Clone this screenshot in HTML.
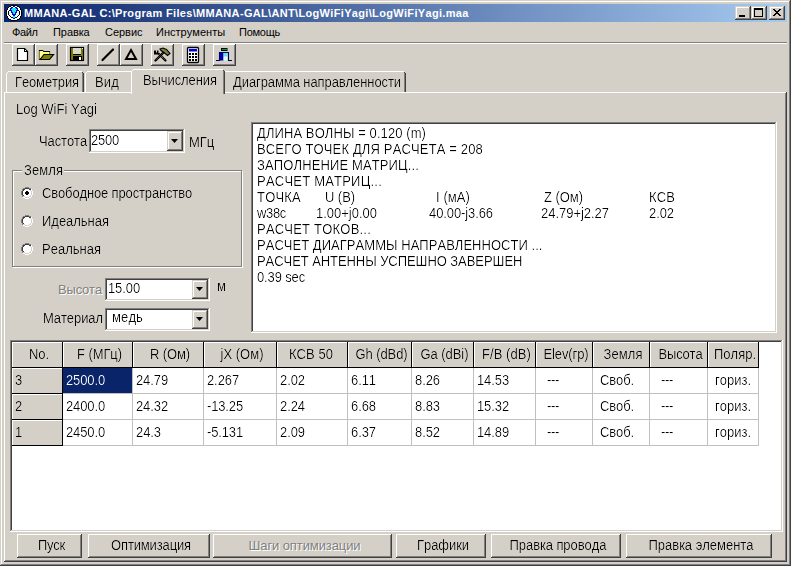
<!DOCTYPE html>
<html><head><meta charset="utf-8">
<style>
html,body{margin:0;padding:0;}
body{width:791px;height:566px;position:relative;overflow:hidden;background:#D4D0C8;font-family:"Liberation Sans",sans-serif;}
.r{position:absolute;}
.t{position:absolute;white-space:pre;font-kerning:none;}
</style></head><body>
<div class="r" style="left:0px;top:0px;width:791px;height:566px;background:#404040;"></div>
<div class="r" style="left:0px;top:0px;width:790px;height:565px;background:#D4D0C8;"></div>
<div class="r" style="left:1px;top:1px;width:789px;height:564px;background:#808080;"></div>
<div class="r" style="left:1px;top:1px;width:788px;height:563px;background:#FFFFFF;"></div>
<div class="r" style="left:2px;top:2px;width:787px;height:562px;background:#D4D0C8;"></div>
<div class="r" style="left:4px;top:4px;width:783px;height:18px;background:linear-gradient(to right,#0A246A,#A6CAF0);"></div>
<svg class="r" style="left:6px;top:5px" width="16" height="16" shape-rendering="crispEdges"><rect x="5" y="0" width="6" height="1" fill="#000000"/><rect x="3" y="1" width="2" height="1" fill="#000000"/><rect x="5" y="1" width="2" height="1" fill="#FFFFFF"/><rect x="7" y="1" width="2" height="1" fill="#0010B0"/><rect x="9" y="1" width="2" height="1" fill="#FFFFFF"/><rect x="11" y="1" width="2" height="1" fill="#000000"/><rect x="2" y="2" width="1" height="1" fill="#000000"/><rect x="3" y="2" width="2" height="1" fill="#FFFFFF"/><rect x="5" y="2" width="2" height="1" fill="#0010B0"/><rect x="7" y="2" width="2" height="1" fill="#FFFFFF"/><rect x="9" y="2" width="2" height="1" fill="#0010B0"/><rect x="11" y="2" width="2" height="1" fill="#FFFFFF"/><rect x="13" y="2" width="1" height="1" fill="#000000"/><rect x="1" y="3" width="1" height="1" fill="#000000"/><rect x="2" y="3" width="2" height="1" fill="#FFFFFF"/><rect x="4" y="3" width="2" height="1" fill="#0010B0"/><rect x="6" y="3" width="4" height="1" fill="#20E0FF"/><rect x="10" y="3" width="2" height="1" fill="#0010B0"/><rect x="12" y="3" width="2" height="1" fill="#FFFFFF"/><rect x="14" y="3" width="1" height="1" fill="#000000"/><rect x="1" y="4" width="1" height="1" fill="#000000"/><rect x="2" y="4" width="2" height="1" fill="#FFFFFF"/><rect x="4" y="4" width="1" height="1" fill="#0010B0"/><rect x="5" y="4" width="6" height="1" fill="#20E0FF"/><rect x="11" y="4" width="1" height="1" fill="#0010B0"/><rect x="12" y="4" width="2" height="1" fill="#FFFFFF"/><rect x="14" y="4" width="1" height="1" fill="#000000"/><rect x="0" y="5" width="1" height="1" fill="#000000"/><rect x="1" y="5" width="2" height="1" fill="#FFFFFF"/><rect x="3" y="5" width="1" height="1" fill="#000000"/><rect x="4" y="5" width="2" height="1" fill="#0010B0"/><rect x="6" y="5" width="4" height="1" fill="#20E0FF"/><rect x="10" y="5" width="2" height="1" fill="#0010B0"/><rect x="12" y="5" width="1" height="1" fill="#000000"/><rect x="13" y="5" width="2" height="1" fill="#FFFFFF"/><rect x="15" y="5" width="1" height="1" fill="#000000"/><rect x="0" y="6" width="1" height="1" fill="#000000"/><rect x="1" y="6" width="1" height="1" fill="#FFFFFF"/><rect x="2" y="6" width="1" height="1" fill="#000000"/><rect x="3" y="6" width="2" height="1" fill="#E8F8FF"/><rect x="5" y="6" width="1" height="1" fill="#0010B0"/><rect x="6" y="6" width="4" height="1" fill="#20E0FF"/><rect x="10" y="6" width="1" height="1" fill="#0010B0"/><rect x="11" y="6" width="2" height="1" fill="#E8F8FF"/><rect x="13" y="6" width="1" height="1" fill="#000000"/><rect x="14" y="6" width="1" height="1" fill="#FFFFFF"/><rect x="15" y="6" width="1" height="1" fill="#000000"/><rect x="0" y="7" width="1" height="1" fill="#000000"/><rect x="1" y="7" width="1" height="1" fill="#FFFFFF"/><rect x="2" y="7" width="1" height="1" fill="#000000"/><rect x="3" y="7" width="2" height="1" fill="#E8F8FF"/><rect x="5" y="7" width="2" height="1" fill="#0010B0"/><rect x="7" y="7" width="2" height="1" fill="#20E0FF"/><rect x="9" y="7" width="2" height="1" fill="#0010B0"/><rect x="11" y="7" width="2" height="1" fill="#E8F8FF"/><rect x="13" y="7" width="1" height="1" fill="#000000"/><rect x="14" y="7" width="1" height="1" fill="#FFFFFF"/><rect x="15" y="7" width="1" height="1" fill="#000000"/><rect x="0" y="8" width="1" height="1" fill="#000000"/><rect x="1" y="8" width="1" height="1" fill="#FFFFFF"/><rect x="2" y="8" width="1" height="1" fill="#000000"/><rect x="3" y="8" width="3" height="1" fill="#E8F8FF"/><rect x="6" y="8" width="1" height="1" fill="#0010B0"/><rect x="7" y="8" width="2" height="1" fill="#20E0FF"/><rect x="9" y="8" width="1" height="1" fill="#0010B0"/><rect x="10" y="8" width="3" height="1" fill="#E8F8FF"/><rect x="13" y="8" width="1" height="1" fill="#000000"/><rect x="14" y="8" width="1" height="1" fill="#FFFFFF"/><rect x="15" y="8" width="1" height="1" fill="#000000"/><rect x="0" y="9" width="1" height="1" fill="#000000"/><rect x="1" y="9" width="1" height="1" fill="#FFFFFF"/><rect x="2" y="9" width="1" height="1" fill="#000000"/><rect x="3" y="9" width="3" height="1" fill="#E8F8FF"/><rect x="6" y="9" width="4" height="1" fill="#0010B0"/><rect x="10" y="9" width="3" height="1" fill="#E8F8FF"/><rect x="13" y="9" width="1" height="1" fill="#000000"/><rect x="14" y="9" width="1" height="1" fill="#FFFFFF"/><rect x="15" y="9" width="1" height="1" fill="#000000"/><rect x="0" y="10" width="1" height="1" fill="#000000"/><rect x="1" y="10" width="2" height="1" fill="#FFFFFF"/><rect x="3" y="10" width="1" height="1" fill="#000000"/><rect x="4" y="10" width="3" height="1" fill="#E8F8FF"/><rect x="7" y="10" width="2" height="1" fill="#0010B0"/><rect x="9" y="10" width="3" height="1" fill="#E8F8FF"/><rect x="12" y="10" width="1" height="1" fill="#000000"/><rect x="13" y="10" width="2" height="1" fill="#FFFFFF"/><rect x="15" y="10" width="1" height="1" fill="#000000"/><rect x="1" y="11" width="1" height="1" fill="#000000"/><rect x="2" y="11" width="2" height="1" fill="#FFFFFF"/><rect x="4" y="11" width="1" height="1" fill="#000000"/><rect x="5" y="11" width="2" height="1" fill="#E8F8FF"/><rect x="7" y="11" width="2" height="1" fill="#20E0FF"/><rect x="9" y="11" width="2" height="1" fill="#E8F8FF"/><rect x="11" y="11" width="1" height="1" fill="#000000"/><rect x="12" y="11" width="2" height="1" fill="#FFFFFF"/><rect x="14" y="11" width="1" height="1" fill="#000000"/><rect x="1" y="12" width="1" height="1" fill="#000000"/><rect x="2" y="12" width="3" height="1" fill="#FFFFFF"/><rect x="5" y="12" width="2" height="1" fill="#000000"/><rect x="7" y="12" width="2" height="1" fill="#20E0FF"/><rect x="9" y="12" width="2" height="1" fill="#000000"/><rect x="11" y="12" width="3" height="1" fill="#FFFFFF"/><rect x="14" y="12" width="1" height="1" fill="#000000"/><rect x="2" y="13" width="1" height="1" fill="#000000"/><rect x="3" y="13" width="4" height="1" fill="#FFFFFF"/><rect x="7" y="13" width="2" height="1" fill="#0010B0"/><rect x="9" y="13" width="4" height="1" fill="#FFFFFF"/><rect x="13" y="13" width="1" height="1" fill="#000000"/><rect x="3" y="14" width="2" height="1" fill="#000000"/><rect x="5" y="14" width="6" height="1" fill="#FFFFFF"/><rect x="11" y="14" width="2" height="1" fill="#000000"/><rect x="5" y="15" width="6" height="1" fill="#000000"/></svg>
<div class="t u" style="left:24px;top:7.69px;font-size:11px;line-height:11px;color:#fff;font-weight:bold;letter-spacing:0.33px;">MMANA-GAL C:\Program Files\MMANA-GAL\ANT\LogWiFiYagi\LogWiFiYagi.maa</div>
<div class="r" style="left:735px;top:6px;width:16px;height:14px;background:#404040;"></div>
<div class="r" style="left:735px;top:6px;width:15px;height:13px;background:#D4D0C8;"></div>
<div class="r" style="left:736px;top:7px;width:14px;height:12px;background:#808080;"></div>
<div class="r" style="left:736px;top:7px;width:13px;height:11px;background:#FFFFFF;"></div>
<div class="r" style="left:737px;top:8px;width:12px;height:10px;background:#D4D0C8;"></div>
<div class="r" style="left:751px;top:6px;width:16px;height:14px;background:#404040;"></div>
<div class="r" style="left:751px;top:6px;width:15px;height:13px;background:#D4D0C8;"></div>
<div class="r" style="left:752px;top:7px;width:14px;height:12px;background:#808080;"></div>
<div class="r" style="left:752px;top:7px;width:13px;height:11px;background:#FFFFFF;"></div>
<div class="r" style="left:753px;top:8px;width:12px;height:10px;background:#D4D0C8;"></div>
<div class="r" style="left:769px;top:6px;width:16px;height:14px;background:#404040;"></div>
<div class="r" style="left:769px;top:6px;width:15px;height:13px;background:#D4D0C8;"></div>
<div class="r" style="left:770px;top:7px;width:14px;height:12px;background:#808080;"></div>
<div class="r" style="left:770px;top:7px;width:13px;height:11px;background:#FFFFFF;"></div>
<div class="r" style="left:771px;top:8px;width:12px;height:10px;background:#D4D0C8;"></div>
<div class="r" style="left:739px;top:15px;width:6px;height:2px;background:#000;"></div>
<div class="r" style="left:754px;top:8px;width:9px;height:9px;background:#000;"></div>
<div class="r" style="left:755px;top:10px;width:7px;height:6px;background:#D4D0C8;"></div>
<svg class="r" style="left:773px;top:9px" width="8" height="7" viewBox="0 0 8 7" shape-rendering="crispEdges">
<path d="M0 0h2v1h-2z M6 0h2v1h-2z M1 1h2v1h-2z M5 1h2v1h-2z M2 2h4v1h-4z M3 3h2v1h-2z M2 4h4v1h-4z M1 5h2v1h-2z M5 5h2v1h-2z M0 6h2v1h-2z M6 6h2v1h-2z" fill="#000"/>
</svg>
<div class="t u" style="left:12px;top:26.69px;font-size:11px;line-height:11px;color:#000;font-weight:normal;letter-spacing:-0.341px;">Файл</div>
<div class="t u" style="left:53px;top:26.69px;font-size:11px;line-height:11px;color:#000;font-weight:normal;letter-spacing:-0.066px;">Правка</div>
<div class="t u" style="left:105px;top:26.69px;font-size:11px;line-height:11px;color:#000;font-weight:normal;letter-spacing:-0.025px;">Сервис</div>
<div class="t u" style="left:156px;top:26.69px;font-size:11px;line-height:11px;color:#000;font-weight:normal;letter-spacing:0.026px;">Инструменты</div>
<div class="t u" style="left:239px;top:26.69px;font-size:11px;line-height:11px;color:#000;font-weight:normal;letter-spacing:-0.264px;">Помощь</div>
<div class="r" style="left:4px;top:42px;width:783px;height:1px;background:#808080;"></div>
<div class="r" style="left:4px;top:43px;width:783px;height:1px;background:#FFFFFF;"></div>
<div class="r" style="left:12px;top:44px;width:23px;height:22px;background:#404040;"></div>
<div class="r" style="left:12px;top:44px;width:22px;height:21px;background:#FFFFFF;"></div>
<div class="r" style="left:13px;top:45px;width:21px;height:20px;background:#808080;"></div>
<div class="r" style="left:13px;top:45px;width:20px;height:19px;background:#D4D0C8;"></div>
<div class="r" style="left:35px;top:44px;width:23px;height:22px;background:#404040;"></div>
<div class="r" style="left:35px;top:44px;width:22px;height:21px;background:#FFFFFF;"></div>
<div class="r" style="left:36px;top:45px;width:21px;height:20px;background:#808080;"></div>
<div class="r" style="left:36px;top:45px;width:20px;height:19px;background:#D4D0C8;"></div>
<div class="r" style="left:66px;top:44px;width:23px;height:22px;background:#404040;"></div>
<div class="r" style="left:66px;top:44px;width:22px;height:21px;background:#FFFFFF;"></div>
<div class="r" style="left:67px;top:45px;width:21px;height:20px;background:#808080;"></div>
<div class="r" style="left:67px;top:45px;width:20px;height:19px;background:#D4D0C8;"></div>
<div class="r" style="left:97px;top:44px;width:23px;height:22px;background:#404040;"></div>
<div class="r" style="left:97px;top:44px;width:22px;height:21px;background:#FFFFFF;"></div>
<div class="r" style="left:98px;top:45px;width:21px;height:20px;background:#808080;"></div>
<div class="r" style="left:98px;top:45px;width:20px;height:19px;background:#D4D0C8;"></div>
<div class="r" style="left:120px;top:44px;width:23px;height:22px;background:#404040;"></div>
<div class="r" style="left:120px;top:44px;width:22px;height:21px;background:#FFFFFF;"></div>
<div class="r" style="left:121px;top:45px;width:21px;height:20px;background:#808080;"></div>
<div class="r" style="left:121px;top:45px;width:20px;height:19px;background:#D4D0C8;"></div>
<div class="r" style="left:151px;top:44px;width:23px;height:22px;background:#404040;"></div>
<div class="r" style="left:151px;top:44px;width:22px;height:21px;background:#FFFFFF;"></div>
<div class="r" style="left:152px;top:45px;width:21px;height:20px;background:#808080;"></div>
<div class="r" style="left:152px;top:45px;width:20px;height:19px;background:#D4D0C8;"></div>
<div class="r" style="left:182px;top:44px;width:23px;height:22px;background:#404040;"></div>
<div class="r" style="left:182px;top:44px;width:22px;height:21px;background:#FFFFFF;"></div>
<div class="r" style="left:183px;top:45px;width:21px;height:20px;background:#808080;"></div>
<div class="r" style="left:183px;top:45px;width:20px;height:19px;background:#D4D0C8;"></div>
<div class="r" style="left:213px;top:44px;width:23px;height:22px;background:#404040;"></div>
<div class="r" style="left:213px;top:44px;width:22px;height:21px;background:#FFFFFF;"></div>
<div class="r" style="left:214px;top:45px;width:21px;height:20px;background:#808080;"></div>
<div class="r" style="left:214px;top:45px;width:20px;height:19px;background:#D4D0C8;"></div>

<svg class="r" style="left:12px;top:44px" width="240" height="22" viewBox="0 0 240 22">
 <!-- new doc -->
 <path d="M5.5 4.5 H12.5 L15.5 7.5 V16.5 H5.5 Z" fill="#fff" stroke="#000" stroke-width="1.2"/>
 <path d="M12 4.5 H13 L15.5 7 V8 H12 Z" fill="#000"/>
 <rect x="13" y="6" width="1" height="1" fill="#fff"/>
 <!-- open folder -->
 <path d="M27.5 15.5 V6.5 H30.5 L31.5 7.5 H37.5 V10.5" fill="#FFFF80" stroke="#000" stroke-width="1.2"/>
 <path d="M27.5 15.5 V7 H30.5 L31.5 8 H37.5 V10.5 H32 Z" fill="#FFFF80"/>
 <path d="M28 15.5 L32 10.5 H41.5 L37.5 15.5 Z" fill="#808000" stroke="#000" stroke-width="1.2"/>
 <!-- save -->
 <rect x="58.5" y="3.5" width="13" height="13" fill="#808000" stroke="#000" stroke-width="1.2"/>
 <rect x="61" y="4" width="8" height="6" fill="#D8D8D0"/>
 <rect x="61" y="10" width="8" height="1" fill="#000"/>
 <rect x="61" y="12" width="9" height="5" fill="#000"/>
 <rect x="67" y="13" width="2" height="3" fill="#fff"/>
 <rect x="70" y="4" width="1" height="1" fill="#fff"/>
 <!-- line -->
 <path d="M90.5 16 L101 5.5" stroke="#000" stroke-width="2.2" stroke-linecap="round"/>
 <!-- triangle -->
 <path d="M119 6 L124 15 H114 Z" fill="none" stroke="#000" stroke-width="2"/>
 <!-- tools -->
 <path d="M143.5 16.5 L151.5 8.5" stroke="#000" stroke-width="2.4" stroke-linecap="round"/>
 <path d="M144 16 L151 9" stroke="#804020" stroke-width="0.7"/>
 <path d="M147 10 L153.5 16.5" stroke="#000" stroke-width="2.2" stroke-linecap="round"/>
 <path d="M147.5 10.5 L153 16" stroke="#fff" stroke-width="0.6" stroke-dasharray="1 1"/>
 <path d="M148 5 L151 4 L154.5 5.5 L158 9.5 L155.5 11.5 L152 8.5 L149 6.5 Z" fill="#808040" stroke="#000" stroke-width="1.1"/>
 <path d="M142 6.5 H144 V8.5 H145 V6.5 H146.5 V10.5 H142 Z" fill="#000"/>
 <!-- calculator -->
 <rect x="175.5" y="3.5" width="11" height="15" rx="1" fill="#fff" stroke="#000" stroke-width="1.3"/>
 <rect x="177" y="5" width="8" height="2.5" fill="#0000E0"/>
 <g fill="#000">
  <rect x="177" y="9" width="2" height="2"/><rect x="180" y="9" width="2" height="2"/><rect x="183" y="9" width="2" height="2"/>
  <rect x="177" y="12" width="2" height="2"/><rect x="180" y="12" width="2" height="2"/><rect x="183" y="12" width="2" height="2"/>
  <rect x="177" y="15" width="2" height="2"/><rect x="180" y="15" width="2" height="2"/><rect x="183" y="15" width="2" height="2"/>
 </g>
 <!-- antenna -->
 <rect x="209.5" y="4.5" width="5.5" height="2" fill="#00A040" stroke="#000" stroke-width="1"/>
 <rect x="207" y="8" width="4.5" height="8.5" fill="#0000A8"/>
 <rect x="211.5" y="8.5" width="4" height="4" fill="#60E0F0"/>
 <rect x="211.5" y="12.5" width="4" height="4" fill="#E0F8FF"/>
 <path d="M204 16.5 H207.5 V8.5 H216.5 V16.5 H220" fill="none" stroke="#000060" stroke-width="1.1"/>
</svg>
<div class="r" style="left:6px;top:71px;width:78px;height:22px;background:#D4D0C8;"></div>
<div class="r" style="left:6px;top:73px;width:1px;height:20px;background:#FFFFFF;"></div>
<div class="r" style="left:7px;top:72px;width:1px;height:1px;background:#FFFFFF;"></div>
<div class="r" style="left:8px;top:71px;width:74px;height:1px;background:#FFFFFF;"></div>
<div class="r" style="left:82px;top:72px;width:1px;height:21px;background:#808080;"></div>
<div class="r" style="left:82px;top:72px;width:1px;height:1px;background:#404040;"></div>
<div class="r" style="left:83px;top:73px;width:1px;height:20px;background:#404040;"></div>
<div class="r" style="left:85px;top:71px;width:49px;height:22px;background:#D4D0C8;"></div>
<div class="r" style="left:85px;top:73px;width:1px;height:20px;background:#FFFFFF;"></div>
<div class="r" style="left:86px;top:72px;width:1px;height:1px;background:#FFFFFF;"></div>
<div class="r" style="left:87px;top:71px;width:45px;height:1px;background:#FFFFFF;"></div>
<div class="r" style="left:132px;top:72px;width:1px;height:21px;background:#808080;"></div>
<div class="r" style="left:132px;top:72px;width:1px;height:1px;background:#404040;"></div>
<div class="r" style="left:133px;top:73px;width:1px;height:20px;background:#404040;"></div>
<div class="r" style="left:222px;top:71px;width:184px;height:22px;background:#D4D0C8;"></div>
<div class="r" style="left:222px;top:73px;width:1px;height:20px;background:#FFFFFF;"></div>
<div class="r" style="left:223px;top:72px;width:1px;height:1px;background:#FFFFFF;"></div>
<div class="r" style="left:224px;top:71px;width:180px;height:1px;background:#FFFFFF;"></div>
<div class="r" style="left:404px;top:72px;width:1px;height:21px;background:#808080;"></div>
<div class="r" style="left:404px;top:72px;width:1px;height:1px;background:#404040;"></div>
<div class="r" style="left:405px;top:73px;width:1px;height:20px;background:#404040;"></div>
<div class="r" style="left:4px;top:92px;width:783px;height:470px;background:#404040;"></div>
<div class="r" style="left:4px;top:92px;width:782px;height:469px;background:#FFFFFF;"></div>
<div class="r" style="left:5px;top:93px;width:781px;height:468px;background:#808080;"></div>
<div class="r" style="left:5px;top:93px;width:780px;height:467px;background:#D4D0C8;"></div>
<div class="r" style="left:131px;top:69px;width:94px;height:25px;background:#D4D0C8;"></div>
<div class="r" style="left:131px;top:71px;width:1px;height:23px;background:#FFFFFF;"></div>
<div class="r" style="left:132px;top:70px;width:1px;height:1px;background:#FFFFFF;"></div>
<div class="r" style="left:133px;top:69px;width:90px;height:1px;background:#FFFFFF;"></div>
<div class="r" style="left:223px;top:70px;width:1px;height:24px;background:#808080;"></div>
<div class="r" style="left:223px;top:70px;width:1px;height:1px;background:#404040;"></div>
<div class="r" style="left:224px;top:71px;width:1px;height:23px;background:#404040;"></div>
<div class="r" style="left:132px;top:92px;width:91px;height:2px;background:#D4D0C8;"></div>
<div class="r" style="left:223px;top:92px;width:1px;height:2px;background:#808080;"></div>
<div class="r" style="left:89px;top:129px;width:96px;height:24px;background:#FFFFFF;"></div>
<div class="r" style="left:89px;top:129px;width:95px;height:23px;background:#808080;"></div>
<div class="r" style="left:90px;top:130px;width:94px;height:22px;background:#D4D0C8;"></div>
<div class="r" style="left:90px;top:130px;width:93px;height:21px;background:#404040;"></div>
<div class="r" style="left:91px;top:131px;width:92px;height:20px;background:#FFFFFF;"></div>
<div class="r" style="left:167px;top:131px;width:16px;height:20px;background:#404040;"></div>
<div class="r" style="left:167px;top:131px;width:15px;height:19px;background:#D4D0C8;"></div>
<div class="r" style="left:168px;top:132px;width:14px;height:18px;background:#808080;"></div>
<div class="r" style="left:168px;top:132px;width:13px;height:17px;background:#FFFFFF;"></div>
<div class="r" style="left:169px;top:133px;width:12px;height:16px;background:#D4D0C8;"></div>
<svg class="r" style="left:171px;top:139px" width="7" height="4" viewBox="0 0 7 4"><path d="M0 0 H7 L3.5 4 Z" fill="#000"/></svg>
<div class="r" style="left:13px;top:171px;width:228px;height:95px;border:1px solid #fff"></div>
<div class="r" style="left:12px;top:170px;width:228px;height:95px;border:1px solid #808080"></div>
<div class="r" style="left:22px;top:165px;width:42px;height:12px;background:#D4D0C8;"></div>
<svg class="r" style="left:21px;top:187px" width="12" height="12" shape-rendering="crispEdges"><rect x="4" y="0" width="4" height="1" fill="#808080"/><rect x="2" y="1" width="2" height="1" fill="#808080"/><rect x="4" y="1" width="4" height="1" fill="#404040"/><rect x="8" y="1" width="2" height="1" fill="#808080"/><rect x="1" y="2" width="1" height="1" fill="#808080"/><rect x="2" y="2" width="2" height="1" fill="#404040"/><rect x="4" y="2" width="4" height="1" fill="#FFFFFF"/><rect x="8" y="2" width="2" height="1" fill="#404040"/><rect x="10" y="2" width="1" height="1" fill="#FFFFFF"/><rect x="1" y="3" width="1" height="1" fill="#808080"/><rect x="2" y="3" width="1" height="1" fill="#404040"/><rect x="3" y="3" width="6" height="1" fill="#FFFFFF"/><rect x="9" y="3" width="1" height="1" fill="#D4D0C8"/><rect x="10" y="3" width="1" height="1" fill="#FFFFFF"/><rect x="0" y="4" width="1" height="1" fill="#808080"/><rect x="1" y="4" width="1" height="1" fill="#404040"/><rect x="2" y="4" width="8" height="1" fill="#FFFFFF"/><rect x="10" y="4" width="1" height="1" fill="#D4D0C8"/><rect x="11" y="4" width="1" height="1" fill="#FFFFFF"/><rect x="0" y="5" width="1" height="1" fill="#808080"/><rect x="1" y="5" width="1" height="1" fill="#404040"/><rect x="2" y="5" width="8" height="1" fill="#FFFFFF"/><rect x="10" y="5" width="1" height="1" fill="#D4D0C8"/><rect x="11" y="5" width="1" height="1" fill="#FFFFFF"/><rect x="0" y="6" width="1" height="1" fill="#808080"/><rect x="1" y="6" width="1" height="1" fill="#404040"/><rect x="2" y="6" width="8" height="1" fill="#FFFFFF"/><rect x="10" y="6" width="1" height="1" fill="#D4D0C8"/><rect x="11" y="6" width="1" height="1" fill="#FFFFFF"/><rect x="0" y="7" width="1" height="1" fill="#808080"/><rect x="1" y="7" width="1" height="1" fill="#404040"/><rect x="2" y="7" width="8" height="1" fill="#FFFFFF"/><rect x="10" y="7" width="1" height="1" fill="#D4D0C8"/><rect x="11" y="7" width="1" height="1" fill="#FFFFFF"/><rect x="1" y="8" width="1" height="1" fill="#808080"/><rect x="2" y="8" width="1" height="1" fill="#404040"/><rect x="3" y="8" width="6" height="1" fill="#FFFFFF"/><rect x="9" y="8" width="1" height="1" fill="#D4D0C8"/><rect x="10" y="8" width="1" height="1" fill="#FFFFFF"/><rect x="1" y="9" width="1" height="1" fill="#808080"/><rect x="2" y="9" width="2" height="1" fill="#D4D0C8"/><rect x="4" y="9" width="4" height="1" fill="#FFFFFF"/><rect x="8" y="9" width="2" height="1" fill="#D4D0C8"/><rect x="10" y="9" width="1" height="1" fill="#FFFFFF"/><rect x="2" y="10" width="2" height="1" fill="#FFFFFF"/><rect x="4" y="10" width="4" height="1" fill="#D4D0C8"/><rect x="8" y="10" width="2" height="1" fill="#FFFFFF"/><rect x="4" y="11" width="4" height="1" fill="#FFFFFF"/><rect x="5" y="4" width="1" height="1" fill="#000"/><rect x="6" y="4" width="1" height="1" fill="#000"/><rect x="4" y="5" width="1" height="1" fill="#000"/><rect x="5" y="5" width="1" height="1" fill="#000"/><rect x="6" y="5" width="1" height="1" fill="#000"/><rect x="7" y="5" width="1" height="1" fill="#000"/><rect x="4" y="6" width="1" height="1" fill="#000"/><rect x="5" y="6" width="1" height="1" fill="#000"/><rect x="6" y="6" width="1" height="1" fill="#000"/><rect x="7" y="6" width="1" height="1" fill="#000"/><rect x="5" y="7" width="1" height="1" fill="#000"/><rect x="6" y="7" width="1" height="1" fill="#000"/></svg>
<svg class="r" style="left:21px;top:215px" width="12" height="12" shape-rendering="crispEdges"><rect x="4" y="0" width="4" height="1" fill="#808080"/><rect x="2" y="1" width="2" height="1" fill="#808080"/><rect x="4" y="1" width="4" height="1" fill="#404040"/><rect x="8" y="1" width="2" height="1" fill="#808080"/><rect x="1" y="2" width="1" height="1" fill="#808080"/><rect x="2" y="2" width="2" height="1" fill="#404040"/><rect x="4" y="2" width="4" height="1" fill="#FFFFFF"/><rect x="8" y="2" width="2" height="1" fill="#404040"/><rect x="10" y="2" width="1" height="1" fill="#FFFFFF"/><rect x="1" y="3" width="1" height="1" fill="#808080"/><rect x="2" y="3" width="1" height="1" fill="#404040"/><rect x="3" y="3" width="6" height="1" fill="#FFFFFF"/><rect x="9" y="3" width="1" height="1" fill="#D4D0C8"/><rect x="10" y="3" width="1" height="1" fill="#FFFFFF"/><rect x="0" y="4" width="1" height="1" fill="#808080"/><rect x="1" y="4" width="1" height="1" fill="#404040"/><rect x="2" y="4" width="8" height="1" fill="#FFFFFF"/><rect x="10" y="4" width="1" height="1" fill="#D4D0C8"/><rect x="11" y="4" width="1" height="1" fill="#FFFFFF"/><rect x="0" y="5" width="1" height="1" fill="#808080"/><rect x="1" y="5" width="1" height="1" fill="#404040"/><rect x="2" y="5" width="8" height="1" fill="#FFFFFF"/><rect x="10" y="5" width="1" height="1" fill="#D4D0C8"/><rect x="11" y="5" width="1" height="1" fill="#FFFFFF"/><rect x="0" y="6" width="1" height="1" fill="#808080"/><rect x="1" y="6" width="1" height="1" fill="#404040"/><rect x="2" y="6" width="8" height="1" fill="#FFFFFF"/><rect x="10" y="6" width="1" height="1" fill="#D4D0C8"/><rect x="11" y="6" width="1" height="1" fill="#FFFFFF"/><rect x="0" y="7" width="1" height="1" fill="#808080"/><rect x="1" y="7" width="1" height="1" fill="#404040"/><rect x="2" y="7" width="8" height="1" fill="#FFFFFF"/><rect x="10" y="7" width="1" height="1" fill="#D4D0C8"/><rect x="11" y="7" width="1" height="1" fill="#FFFFFF"/><rect x="1" y="8" width="1" height="1" fill="#808080"/><rect x="2" y="8" width="1" height="1" fill="#404040"/><rect x="3" y="8" width="6" height="1" fill="#FFFFFF"/><rect x="9" y="8" width="1" height="1" fill="#D4D0C8"/><rect x="10" y="8" width="1" height="1" fill="#FFFFFF"/><rect x="1" y="9" width="1" height="1" fill="#808080"/><rect x="2" y="9" width="2" height="1" fill="#D4D0C8"/><rect x="4" y="9" width="4" height="1" fill="#FFFFFF"/><rect x="8" y="9" width="2" height="1" fill="#D4D0C8"/><rect x="10" y="9" width="1" height="1" fill="#FFFFFF"/><rect x="2" y="10" width="2" height="1" fill="#FFFFFF"/><rect x="4" y="10" width="4" height="1" fill="#D4D0C8"/><rect x="8" y="10" width="2" height="1" fill="#FFFFFF"/><rect x="4" y="11" width="4" height="1" fill="#FFFFFF"/></svg>
<svg class="r" style="left:21px;top:243px" width="12" height="12" shape-rendering="crispEdges"><rect x="4" y="0" width="4" height="1" fill="#808080"/><rect x="2" y="1" width="2" height="1" fill="#808080"/><rect x="4" y="1" width="4" height="1" fill="#404040"/><rect x="8" y="1" width="2" height="1" fill="#808080"/><rect x="1" y="2" width="1" height="1" fill="#808080"/><rect x="2" y="2" width="2" height="1" fill="#404040"/><rect x="4" y="2" width="4" height="1" fill="#FFFFFF"/><rect x="8" y="2" width="2" height="1" fill="#404040"/><rect x="10" y="2" width="1" height="1" fill="#FFFFFF"/><rect x="1" y="3" width="1" height="1" fill="#808080"/><rect x="2" y="3" width="1" height="1" fill="#404040"/><rect x="3" y="3" width="6" height="1" fill="#FFFFFF"/><rect x="9" y="3" width="1" height="1" fill="#D4D0C8"/><rect x="10" y="3" width="1" height="1" fill="#FFFFFF"/><rect x="0" y="4" width="1" height="1" fill="#808080"/><rect x="1" y="4" width="1" height="1" fill="#404040"/><rect x="2" y="4" width="8" height="1" fill="#FFFFFF"/><rect x="10" y="4" width="1" height="1" fill="#D4D0C8"/><rect x="11" y="4" width="1" height="1" fill="#FFFFFF"/><rect x="0" y="5" width="1" height="1" fill="#808080"/><rect x="1" y="5" width="1" height="1" fill="#404040"/><rect x="2" y="5" width="8" height="1" fill="#FFFFFF"/><rect x="10" y="5" width="1" height="1" fill="#D4D0C8"/><rect x="11" y="5" width="1" height="1" fill="#FFFFFF"/><rect x="0" y="6" width="1" height="1" fill="#808080"/><rect x="1" y="6" width="1" height="1" fill="#404040"/><rect x="2" y="6" width="8" height="1" fill="#FFFFFF"/><rect x="10" y="6" width="1" height="1" fill="#D4D0C8"/><rect x="11" y="6" width="1" height="1" fill="#FFFFFF"/><rect x="0" y="7" width="1" height="1" fill="#808080"/><rect x="1" y="7" width="1" height="1" fill="#404040"/><rect x="2" y="7" width="8" height="1" fill="#FFFFFF"/><rect x="10" y="7" width="1" height="1" fill="#D4D0C8"/><rect x="11" y="7" width="1" height="1" fill="#FFFFFF"/><rect x="1" y="8" width="1" height="1" fill="#808080"/><rect x="2" y="8" width="1" height="1" fill="#404040"/><rect x="3" y="8" width="6" height="1" fill="#FFFFFF"/><rect x="9" y="8" width="1" height="1" fill="#D4D0C8"/><rect x="10" y="8" width="1" height="1" fill="#FFFFFF"/><rect x="1" y="9" width="1" height="1" fill="#808080"/><rect x="2" y="9" width="2" height="1" fill="#D4D0C8"/><rect x="4" y="9" width="4" height="1" fill="#FFFFFF"/><rect x="8" y="9" width="2" height="1" fill="#D4D0C8"/><rect x="10" y="9" width="1" height="1" fill="#FFFFFF"/><rect x="2" y="10" width="2" height="1" fill="#FFFFFF"/><rect x="4" y="10" width="4" height="1" fill="#D4D0C8"/><rect x="8" y="10" width="2" height="1" fill="#FFFFFF"/><rect x="4" y="11" width="4" height="1" fill="#FFFFFF"/></svg>
<div class="t u" style="left:59px;top:284.00px;font-size:13px;line-height:13px;color:#fff;font-weight:normal;letter-spacing:-0.155px;">Высота</div>
<div class="t u" style="left:58px;top:283.00px;font-size:13px;line-height:13px;color:#808080;font-weight:normal;letter-spacing:-0.155px;">Высота</div>
<div class="r" style="left:105px;top:278px;width:105px;height:23px;background:#FFFFFF;"></div>
<div class="r" style="left:105px;top:278px;width:104px;height:22px;background:#808080;"></div>
<div class="r" style="left:106px;top:279px;width:103px;height:21px;background:#D4D0C8;"></div>
<div class="r" style="left:106px;top:279px;width:102px;height:20px;background:#404040;"></div>
<div class="r" style="left:107px;top:280px;width:101px;height:19px;background:#FFFFFF;"></div>
<div class="r" style="left:192px;top:280px;width:16px;height:19px;background:#404040;"></div>
<div class="r" style="left:192px;top:280px;width:15px;height:18px;background:#D4D0C8;"></div>
<div class="r" style="left:193px;top:281px;width:14px;height:17px;background:#808080;"></div>
<div class="r" style="left:193px;top:281px;width:13px;height:16px;background:#FFFFFF;"></div>
<div class="r" style="left:194px;top:282px;width:12px;height:15px;background:#D4D0C8;"></div>
<svg class="r" style="left:196px;top:287px" width="7" height="4" viewBox="0 0 7 4"><path d="M0 0 H7 L3.5 4 Z" fill="#000"/></svg>
<div class="r" style="left:105px;top:308px;width:105px;height:23px;background:#FFFFFF;"></div>
<div class="r" style="left:105px;top:308px;width:104px;height:22px;background:#808080;"></div>
<div class="r" style="left:106px;top:309px;width:103px;height:21px;background:#D4D0C8;"></div>
<div class="r" style="left:106px;top:309px;width:102px;height:20px;background:#404040;"></div>
<div class="r" style="left:107px;top:310px;width:101px;height:19px;background:#FFFFFF;"></div>
<div class="r" style="left:192px;top:310px;width:16px;height:19px;background:#404040;"></div>
<div class="r" style="left:192px;top:310px;width:15px;height:18px;background:#D4D0C8;"></div>
<div class="r" style="left:193px;top:311px;width:14px;height:17px;background:#808080;"></div>
<div class="r" style="left:193px;top:311px;width:13px;height:16px;background:#FFFFFF;"></div>
<div class="r" style="left:194px;top:312px;width:12px;height:15px;background:#D4D0C8;"></div>
<svg class="r" style="left:196px;top:317px" width="7" height="4" viewBox="0 0 7 4"><path d="M0 0 H7 L3.5 4 Z" fill="#000"/></svg>
<div class="r" style="left:251px;top:122px;width:526px;height:211px;background:#FFFFFF;"></div>
<div class="r" style="left:251px;top:122px;width:525px;height:210px;background:#808080;"></div>
<div class="r" style="left:252px;top:123px;width:524px;height:209px;background:#D4D0C8;"></div>
<div class="r" style="left:252px;top:123px;width:523px;height:208px;background:#404040;"></div>
<div class="r" style="left:253px;top:124px;width:522px;height:207px;background:#FFFFFF;"></div>
<div class="r" style="left:10px;top:340px;width:773px;height:192px;background:#FFFFFF;"></div>
<div class="r" style="left:10px;top:340px;width:772px;height:191px;background:#808080;"></div>
<div class="r" style="left:11px;top:341px;width:771px;height:190px;background:#D4D0C8;"></div>
<div class="r" style="left:11px;top:341px;width:770px;height:189px;background:#404040;"></div>
<div class="r" style="left:12px;top:342px;width:769px;height:188px;background:#FFFFFF;"></div>
<div class="r" style="left:63px;top:393px;width:696px;height:1px;background:#C0C0C0;"></div>
<div class="r" style="left:63px;top:419px;width:696px;height:1px;background:#C0C0C0;"></div>
<div class="r" style="left:63px;top:445px;width:696px;height:1px;background:#C0C0C0;"></div>
<div class="r" style="left:132px;top:368px;width:1px;height:78px;background:#C0C0C0;"></div>
<div class="r" style="left:203px;top:368px;width:1px;height:78px;background:#C0C0C0;"></div>
<div class="r" style="left:276px;top:368px;width:1px;height:78px;background:#C0C0C0;"></div>
<div class="r" style="left:347px;top:368px;width:1px;height:78px;background:#C0C0C0;"></div>
<div class="r" style="left:411px;top:368px;width:1px;height:78px;background:#C0C0C0;"></div>
<div class="r" style="left:473px;top:368px;width:1px;height:78px;background:#C0C0C0;"></div>
<div class="r" style="left:535px;top:368px;width:1px;height:78px;background:#C0C0C0;"></div>
<div class="r" style="left:592px;top:368px;width:1px;height:78px;background:#C0C0C0;"></div>
<div class="r" style="left:649px;top:368px;width:1px;height:78px;background:#C0C0C0;"></div>
<div class="r" style="left:707px;top:368px;width:1px;height:78px;background:#C0C0C0;"></div>
<div class="r" style="left:758px;top:368px;width:1px;height:78px;background:#C0C0C0;"></div>
<div class="r" style="left:12px;top:342px;width:50px;height:25px;background:#D4D0C8;"></div>
<div class="r" style="left:12px;top:342px;width:50px;height:1px;background:#FFFFFF;"></div>
<div class="r" style="left:12px;top:342px;width:1px;height:25px;background:#FFFFFF;"></div>
<div class="r" style="left:62px;top:342px;width:1px;height:26px;background:#000;"></div>
<div class="r" style="left:63px;top:342px;width:69px;height:25px;background:#D4D0C8;"></div>
<div class="r" style="left:63px;top:342px;width:69px;height:1px;background:#FFFFFF;"></div>
<div class="r" style="left:63px;top:342px;width:1px;height:25px;background:#FFFFFF;"></div>
<div class="r" style="left:132px;top:342px;width:1px;height:26px;background:#000;"></div>
<div class="r" style="left:133px;top:342px;width:70px;height:25px;background:#D4D0C8;"></div>
<div class="r" style="left:133px;top:342px;width:70px;height:1px;background:#FFFFFF;"></div>
<div class="r" style="left:133px;top:342px;width:1px;height:25px;background:#FFFFFF;"></div>
<div class="r" style="left:203px;top:342px;width:1px;height:26px;background:#000;"></div>
<div class="r" style="left:204px;top:342px;width:72px;height:25px;background:#D4D0C8;"></div>
<div class="r" style="left:204px;top:342px;width:72px;height:1px;background:#FFFFFF;"></div>
<div class="r" style="left:204px;top:342px;width:1px;height:25px;background:#FFFFFF;"></div>
<div class="r" style="left:276px;top:342px;width:1px;height:26px;background:#000;"></div>
<div class="r" style="left:277px;top:342px;width:70px;height:25px;background:#D4D0C8;"></div>
<div class="r" style="left:277px;top:342px;width:70px;height:1px;background:#FFFFFF;"></div>
<div class="r" style="left:277px;top:342px;width:1px;height:25px;background:#FFFFFF;"></div>
<div class="r" style="left:347px;top:342px;width:1px;height:26px;background:#000;"></div>
<div class="r" style="left:348px;top:342px;width:63px;height:25px;background:#D4D0C8;"></div>
<div class="r" style="left:348px;top:342px;width:63px;height:1px;background:#FFFFFF;"></div>
<div class="r" style="left:348px;top:342px;width:1px;height:25px;background:#FFFFFF;"></div>
<div class="r" style="left:411px;top:342px;width:1px;height:26px;background:#000;"></div>
<div class="r" style="left:412px;top:342px;width:61px;height:25px;background:#D4D0C8;"></div>
<div class="r" style="left:412px;top:342px;width:61px;height:1px;background:#FFFFFF;"></div>
<div class="r" style="left:412px;top:342px;width:1px;height:25px;background:#FFFFFF;"></div>
<div class="r" style="left:473px;top:342px;width:1px;height:26px;background:#000;"></div>
<div class="r" style="left:474px;top:342px;width:61px;height:25px;background:#D4D0C8;"></div>
<div class="r" style="left:474px;top:342px;width:61px;height:1px;background:#FFFFFF;"></div>
<div class="r" style="left:474px;top:342px;width:1px;height:25px;background:#FFFFFF;"></div>
<div class="r" style="left:535px;top:342px;width:1px;height:26px;background:#000;"></div>
<div class="r" style="left:536px;top:342px;width:56px;height:25px;background:#D4D0C8;"></div>
<div class="r" style="left:536px;top:342px;width:56px;height:1px;background:#FFFFFF;"></div>
<div class="r" style="left:536px;top:342px;width:1px;height:25px;background:#FFFFFF;"></div>
<div class="r" style="left:592px;top:342px;width:1px;height:26px;background:#000;"></div>
<div class="r" style="left:593px;top:342px;width:56px;height:25px;background:#D4D0C8;"></div>
<div class="r" style="left:593px;top:342px;width:56px;height:1px;background:#FFFFFF;"></div>
<div class="r" style="left:593px;top:342px;width:1px;height:25px;background:#FFFFFF;"></div>
<div class="r" style="left:649px;top:342px;width:1px;height:26px;background:#000;"></div>
<div class="r" style="left:650px;top:342px;width:57px;height:25px;background:#D4D0C8;"></div>
<div class="r" style="left:650px;top:342px;width:57px;height:1px;background:#FFFFFF;"></div>
<div class="r" style="left:650px;top:342px;width:1px;height:25px;background:#FFFFFF;"></div>
<div class="r" style="left:707px;top:342px;width:1px;height:26px;background:#000;"></div>
<div class="r" style="left:708px;top:342px;width:50px;height:25px;background:#D4D0C8;"></div>
<div class="r" style="left:708px;top:342px;width:50px;height:1px;background:#FFFFFF;"></div>
<div class="r" style="left:708px;top:342px;width:1px;height:25px;background:#FFFFFF;"></div>
<div class="r" style="left:758px;top:342px;width:1px;height:26px;background:#000;"></div>
<div class="r" style="left:12px;top:367px;width:747px;height:1px;background:#000;"></div>
<div class="r" style="left:12px;top:368px;width:50px;height:25px;background:#D4D0C8;"></div>
<div class="r" style="left:12px;top:368px;width:50px;height:1px;background:#FFFFFF;"></div>
<div class="r" style="left:12px;top:368px;width:1px;height:25px;background:#FFFFFF;"></div>
<div class="r" style="left:12px;top:393px;width:51px;height:1px;background:#000;"></div>
<div class="r" style="left:62px;top:368px;width:1px;height:26px;background:#000;"></div>
<div class="r" style="left:12px;top:394px;width:50px;height:25px;background:#D4D0C8;"></div>
<div class="r" style="left:12px;top:394px;width:50px;height:1px;background:#FFFFFF;"></div>
<div class="r" style="left:12px;top:394px;width:1px;height:25px;background:#FFFFFF;"></div>
<div class="r" style="left:12px;top:419px;width:51px;height:1px;background:#000;"></div>
<div class="r" style="left:62px;top:394px;width:1px;height:26px;background:#000;"></div>
<div class="r" style="left:12px;top:420px;width:50px;height:25px;background:#D4D0C8;"></div>
<div class="r" style="left:12px;top:420px;width:50px;height:1px;background:#FFFFFF;"></div>
<div class="r" style="left:12px;top:420px;width:1px;height:25px;background:#FFFFFF;"></div>
<div class="r" style="left:12px;top:445px;width:51px;height:1px;background:#000;"></div>
<div class="r" style="left:62px;top:420px;width:1px;height:26px;background:#000;"></div>
<div class="r" style="left:63px;top:368px;width:69px;height:25px;background:#0A246A;"></div>
<div class="r" style="left:17px;top:534px;width:65px;height:24px;background:#404040;"></div>
<div class="r" style="left:17px;top:534px;width:64px;height:23px;background:#FFFFFF;"></div>
<div class="r" style="left:18px;top:535px;width:63px;height:22px;background:#808080;"></div>
<div class="r" style="left:18px;top:535px;width:62px;height:21px;background:#D4D0C8;"></div>
<div class="r" style="left:88px;top:534px;width:122px;height:24px;background:#404040;"></div>
<div class="r" style="left:88px;top:534px;width:121px;height:23px;background:#FFFFFF;"></div>
<div class="r" style="left:89px;top:535px;width:120px;height:22px;background:#808080;"></div>
<div class="r" style="left:89px;top:535px;width:119px;height:21px;background:#D4D0C8;"></div>
<div class="r" style="left:213px;top:534px;width:179px;height:24px;background:#404040;"></div>
<div class="r" style="left:213px;top:534px;width:178px;height:23px;background:#FFFFFF;"></div>
<div class="r" style="left:214px;top:535px;width:177px;height:22px;background:#808080;"></div>
<div class="r" style="left:214px;top:535px;width:176px;height:21px;background:#D4D0C8;"></div>
<div class="t u" style="left:216px;top:540.00px;font-size:13px;line-height:13px;color:#fff;font-weight:normal;letter-spacing:-0.100px;width:179px;text-align:center;">Шаги оптимизации</div>
<div class="t u" style="left:215px;top:539.00px;font-size:13px;line-height:13px;color:#808080;font-weight:normal;letter-spacing:-0.100px;width:179px;text-align:center;">Шаги оптимизации</div>
<div class="r" style="left:396px;top:534px;width:90px;height:24px;background:#404040;"></div>
<div class="r" style="left:396px;top:534px;width:89px;height:23px;background:#FFFFFF;"></div>
<div class="r" style="left:397px;top:535px;width:88px;height:22px;background:#808080;"></div>
<div class="r" style="left:397px;top:535px;width:87px;height:21px;background:#D4D0C8;"></div>
<div class="r" style="left:491px;top:534px;width:130px;height:24px;background:#404040;"></div>
<div class="r" style="left:491px;top:534px;width:129px;height:23px;background:#FFFFFF;"></div>
<div class="r" style="left:492px;top:535px;width:128px;height:22px;background:#808080;"></div>
<div class="r" style="left:492px;top:535px;width:127px;height:21px;background:#D4D0C8;"></div>
<div class="r" style="left:626px;top:534px;width:146px;height:24px;background:#404040;"></div>
<div class="r" style="left:626px;top:534px;width:145px;height:23px;background:#FFFFFF;"></div>
<div class="r" style="left:627px;top:535px;width:144px;height:22px;background:#808080;"></div>
<div class="r" style="left:627px;top:535px;width:143px;height:21px;background:#D4D0C8;"></div>
<svg width="0" height="0" style="position:absolute"><filter id="crisp" x="0" y="0" width="100%" height="100%"><feComponentTransfer><feFuncA type="gamma" amplitude="1" exponent="1.6" offset="0"/></feComponentTransfer></filter></svg>
<div style="position:absolute;left:0;top:0;width:791px;height:566px;filter:url(#crisp)">
<div class="t" style="left:15px;top:76.00px;font-size:13px;line-height:13px;color:#000;font-weight:normal;letter-spacing:-0.128px;transform:scaleY(1.08);transform-origin:0 11.00px;">Геометрия</div>
<div class="t" style="left:95px;top:76.00px;font-size:13px;line-height:13px;color:#000;font-weight:normal;letter-spacing:0.161px;transform:scaleY(1.08);transform-origin:0 11.00px;">Вид</div>
<div class="t" style="left:143px;top:74.00px;font-size:13px;line-height:13px;color:#000;font-weight:normal;letter-spacing:-0.085px;transform:scaleY(1.08);transform-origin:0 11.00px;">Вычисления</div>
<div class="t" style="left:233px;top:76.00px;font-size:13px;line-height:13px;color:#000;font-weight:normal;letter-spacing:-0.090px;transform:scaleY(1.08);transform-origin:0 11.00px;">Диаграмма направленности</div>
<div class="t" style="left:16px;top:103.00px;font-size:13px;line-height:13px;color:#000;font-weight:normal;letter-spacing:0.006px;transform:scaleY(1.08);transform-origin:0 11.00px;">Log WiFi Yagi</div>
<div class="t" style="left:39px;top:135.00px;font-size:13px;line-height:13px;color:#000;font-weight:normal;letter-spacing:-0.109px;transform:scaleY(1.08);transform-origin:0 11.00px;">Частота</div>
<div class="t" style="left:91px;top:134.00px;font-size:13px;line-height:13px;color:#000;font-weight:normal;letter-spacing:-0.230px;transform:scaleY(1.08);transform-origin:0 11.00px;">2500</div>
<div class="t" style="left:189px;top:136.00px;font-size:13px;line-height:13px;color:#000;font-weight:normal;letter-spacing:-0.105px;transform:scaleY(1.08);transform-origin:0 11.00px;">МГц</div>
<div class="t" style="left:24px;top:164.00px;font-size:13px;line-height:13px;color:#000;font-weight:normal;letter-spacing:0.071px;transform:scaleY(1.08);transform-origin:0 11.00px;">Земля</div>
<div class="t" style="left:42px;top:187.00px;font-size:13px;line-height:13px;color:#000;font-weight:normal;letter-spacing:-0.146px;transform:scaleY(1.08);transform-origin:0 11.00px;">Свободное пространство</div>
<div class="t" style="left:42px;top:215.00px;font-size:13px;line-height:13px;color:#000;font-weight:normal;letter-spacing:-0.022px;transform:scaleY(1.08);transform-origin:0 11.00px;">Идеальная</div>
<div class="t" style="left:42px;top:243.00px;font-size:13px;line-height:13px;color:#000;font-weight:normal;letter-spacing:0.008px;transform:scaleY(1.08);transform-origin:0 11.00px;">Реальная</div>
<div class="t" style="left:108px;top:282.00px;font-size:13px;line-height:13px;color:#000;font-weight:normal;letter-spacing:-0.106px;transform:scaleY(1.08);transform-origin:0 11.00px;">15.00</div>
<div class="t" style="left:217px;top:280.00px;font-size:13px;line-height:13px;color:#000;font-weight:normal;letter-spacing:0.062px;transform:scaleY(1.08);transform-origin:0 11.00px;">м</div>
<div class="t" style="left:43px;top:312.00px;font-size:13px;line-height:13px;color:#000;font-weight:normal;letter-spacing:-0.069px;transform:scaleY(1.08);transform-origin:0 11.00px;">Материал</div>
<div class="t" style="left:112px;top:311.00px;font-size:13px;line-height:13px;color:#000;font-weight:normal;letter-spacing:0.119px;transform:scaleY(1.08);transform-origin:0 11.00px;">медь</div>
<div class="t" style="left:257px;top:127.00px;font-size:13px;line-height:13px;color:#000;font-weight:normal;letter-spacing:0.087px;transform:scaleY(1.08);transform-origin:0 11.00px;">ДЛИНА ВОЛНЫ = 0.120 (m)</div>
<div class="t" style="left:257px;top:143.00px;font-size:13px;line-height:13px;color:#000;font-weight:normal;letter-spacing:0.152px;transform:scaleY(1.08);transform-origin:0 11.00px;">ВСЕГО ТОЧЕК ДЛЯ РАСЧЕТА = 208</div>
<div class="t" style="left:257px;top:159.00px;font-size:13px;line-height:13px;color:#000;font-weight:normal;letter-spacing:0.125px;transform:scaleY(1.08);transform-origin:0 11.00px;">ЗАПОЛНЕНИЕ МАТРИЦ...</div>
<div class="t" style="left:257px;top:175.00px;font-size:13px;line-height:13px;color:#000;font-weight:normal;letter-spacing:0.217px;transform:scaleY(1.08);transform-origin:0 11.00px;">РАСЧЕТ МАТРИЦ...</div>
<div class="t" style="left:257px;top:191.00px;font-size:13px;line-height:13px;color:#000;font-weight:normal;letter-spacing:0.208px;transform:scaleY(1.08);transform-origin:0 11.00px;">ТОЧКА</div>
<div class="t" style="left:325px;top:191.00px;font-size:13px;line-height:13px;color:#000;font-weight:normal;letter-spacing:-0.066px;transform:scaleY(1.08);transform-origin:0 11.00px;">U (B)</div>
<div class="t" style="left:436px;top:191.00px;font-size:13px;line-height:13px;color:#000;font-weight:normal;letter-spacing:0.085px;transform:scaleY(1.08);transform-origin:0 11.00px;">I (мА)</div>
<div class="t" style="left:544px;top:191.00px;font-size:13px;line-height:13px;color:#000;font-weight:normal;letter-spacing:-0.043px;transform:scaleY(1.08);transform-origin:0 11.00px;">Z (Ом)</div>
<div class="t" style="left:649px;top:191.00px;font-size:13px;line-height:13px;color:#000;font-weight:normal;letter-spacing:0.123px;transform:scaleY(1.08);transform-origin:0 11.00px;">КСВ</div>
<div class="t" style="left:257px;top:207.00px;font-size:13px;line-height:13px;color:#000;font-weight:normal;letter-spacing:-0.337px;transform:scaleY(1.08);transform-origin:0 11.00px;">w38c</div>
<div class="t" style="left:316px;top:207.00px;font-size:13px;line-height:13px;color:#000;font-weight:normal;letter-spacing:-0.008px;transform:scaleY(1.08);transform-origin:0 11.00px;">1.00+j0.00</div>
<div class="t" style="left:429px;top:207.00px;font-size:13px;line-height:13px;color:#000;font-weight:normal;letter-spacing:-0.096px;transform:scaleY(1.08);transform-origin:0 11.00px;">40.00-j3.66</div>
<div class="t" style="left:541px;top:207.00px;font-size:13px;line-height:13px;color:#000;font-weight:normal;letter-spacing:-0.028px;transform:scaleY(1.08);transform-origin:0 11.00px;">24.79+j2.27</div>
<div class="t" style="left:649px;top:207.00px;font-size:13px;line-height:13px;color:#000;font-weight:normal;letter-spacing:-0.075px;transform:scaleY(1.08);transform-origin:0 11.00px;">2.02</div>
<div class="t" style="left:257px;top:223.00px;font-size:13px;line-height:13px;color:#000;font-weight:normal;letter-spacing:0.209px;transform:scaleY(1.08);transform-origin:0 11.00px;">РАСЧЕТ ТОКОВ...</div>
<div class="t" style="left:257px;top:239.00px;font-size:13px;line-height:13px;color:#000;font-weight:normal;letter-spacing:0.036px;transform:scaleY(1.08);transform-origin:0 11.00px;">РАСЧЕТ ДИАГРАММЫ НАПРАВЛЕННОСТИ ...</div>
<div class="t" style="left:257px;top:255.00px;font-size:13px;line-height:13px;color:#000;font-weight:normal;letter-spacing:-0.067px;transform:scaleY(1.08);transform-origin:0 11.00px;">РАСЧЕТ АНТЕННЫ УСПЕШНО ЗАВЕРШЕН</div>
<div class="t" style="left:257px;top:271.00px;font-size:13px;line-height:13px;color:#000;font-weight:normal;letter-spacing:-0.143px;transform:scaleY(1.08);transform-origin:0 11.00px;">0.39 sec</div>
<div class="t" style="left:14px;top:348.00px;font-size:13px;line-height:13px;color:#000;font-weight:normal;letter-spacing:-0.077px;width:50px;text-align:center;transform:scaleY(1.08);transform-origin:0 11.00px;">No.</div>
<div class="t" style="left:65px;top:348.00px;font-size:13px;line-height:13px;color:#000;font-weight:normal;letter-spacing:-0.075px;width:69px;text-align:center;transform:scaleY(1.08);transform-origin:0 11.00px;">F (MГц)</div>
<div class="t" style="left:135px;top:348.00px;font-size:13px;line-height:13px;color:#000;font-weight:normal;letter-spacing:-0.118px;width:70px;text-align:center;transform:scaleY(1.08);transform-origin:0 11.00px;">R (Ом)</div>
<div class="t" style="left:206px;top:348.00px;font-size:13px;line-height:13px;color:#000;font-weight:normal;letter-spacing:0.017px;width:72px;text-align:center;transform:scaleY(1.08);transform-origin:0 11.00px;">jX (Ом)</div>
<div class="t" style="left:276px;top:348.00px;font-size:13px;line-height:13px;color:#000;font-weight:normal;letter-spacing:0.049px;width:70px;text-align:center;transform:scaleY(1.08);transform-origin:0 11.00px;">КСВ 50</div>
<div class="t" style="left:350px;top:348.00px;font-size:13px;line-height:13px;color:#000;font-weight:normal;letter-spacing:-0.093px;width:63px;text-align:center;transform:scaleY(1.08);transform-origin:0 11.00px;">Gh (dBd)</div>
<div class="t" style="left:414px;top:348.00px;font-size:13px;line-height:13px;color:#000;font-weight:normal;letter-spacing:-0.050px;width:61px;text-align:center;transform:scaleY(1.08);transform-origin:0 11.00px;">Ga (dBi)</div>
<div class="t" style="left:476px;top:348.00px;font-size:13px;line-height:13px;color:#000;font-weight:normal;letter-spacing:0.076px;width:61px;text-align:center;transform:scaleY(1.08);transform-origin:0 11.00px;">F/B (dB)</div>
<div class="t" style="left:538px;top:348.00px;font-size:13px;line-height:13px;color:#000;font-weight:normal;letter-spacing:-0.115px;width:56px;text-align:center;transform:scaleY(1.08);transform-origin:0 11.00px;">Elev(гр)</div>
<div class="t" style="left:595px;top:348.00px;font-size:13px;line-height:13px;color:#000;font-weight:normal;letter-spacing:0.071px;width:56px;text-align:center;transform:scaleY(1.08);transform-origin:0 11.00px;">Земля</div>
<div class="t" style="left:652px;top:348.00px;font-size:13px;line-height:13px;color:#000;font-weight:normal;letter-spacing:-0.155px;width:57px;text-align:center;transform:scaleY(1.08);transform-origin:0 11.00px;">Высота</div>
<div class="t" style="left:710px;top:348.00px;font-size:13px;line-height:13px;color:#000;font-weight:normal;letter-spacing:-0.007px;width:50px;text-align:center;transform:scaleY(1.08);transform-origin:0 11.00px;">Поляр.</div>
<div class="t" style="left:15px;top:374.00px;font-size:13px;line-height:13px;color:#000;font-weight:normal;letter-spacing:-0.230px;transform:scaleY(1.08);transform-origin:0 11.00px;">3</div>
<div class="t" style="left:66px;top:374.00px;font-size:13px;line-height:13px;color:#fff;font-weight:normal;letter-spacing:-0.127px;transform:scaleY(1.08);transform-origin:0 11.00px;">2500.0</div>
<div class="t" style="left:136px;top:374.00px;font-size:13px;line-height:13px;color:#000;font-weight:normal;letter-spacing:-0.106px;transform:scaleY(1.08);transform-origin:0 11.00px;">24.79</div>
<div class="t" style="left:207px;top:374.00px;font-size:13px;line-height:13px;color:#000;font-weight:normal;letter-spacing:-0.106px;transform:scaleY(1.08);transform-origin:0 11.00px;">2.267</div>
<div class="t" style="left:280px;top:374.00px;font-size:13px;line-height:13px;color:#000;font-weight:normal;letter-spacing:-0.075px;transform:scaleY(1.08);transform-origin:0 11.00px;">2.02</div>
<div class="t" style="left:351px;top:374.00px;font-size:13px;line-height:13px;color:#000;font-weight:normal;letter-spacing:-0.075px;transform:scaleY(1.08);transform-origin:0 11.00px;">6.11</div>
<div class="t" style="left:415px;top:374.00px;font-size:13px;line-height:13px;color:#000;font-weight:normal;letter-spacing:-0.075px;transform:scaleY(1.08);transform-origin:0 11.00px;">8.26</div>
<div class="t" style="left:477px;top:374.00px;font-size:13px;line-height:13px;color:#000;font-weight:normal;letter-spacing:-0.106px;transform:scaleY(1.08);transform-origin:0 11.00px;">14.53</div>
<div class="t" style="left:547px;top:374.00px;font-size:13px;line-height:13px;color:#000;font-weight:normal;letter-spacing:-0.329px;transform:scaleY(1.08);transform-origin:0 11.00px;">---</div>
<div class="t" style="left:600px;top:374.00px;font-size:13px;line-height:13px;color:#000;font-weight:normal;letter-spacing:-0.116px;transform:scaleY(1.08);transform-origin:0 11.00px;">Своб.</div>
<div class="t" style="left:661px;top:374.00px;font-size:13px;line-height:13px;color:#000;font-weight:normal;letter-spacing:-0.329px;transform:scaleY(1.08);transform-origin:0 11.00px;">---</div>
<div class="t" style="left:715px;top:374.00px;font-size:13px;line-height:13px;color:#000;font-weight:normal;letter-spacing:-0.006px;transform:scaleY(1.08);transform-origin:0 11.00px;">гориз.</div>
<div class="t" style="left:15px;top:400.00px;font-size:13px;line-height:13px;color:#000;font-weight:normal;letter-spacing:-0.230px;transform:scaleY(1.08);transform-origin:0 11.00px;">2</div>
<div class="t" style="left:66px;top:400.00px;font-size:13px;line-height:13px;color:#000;font-weight:normal;letter-spacing:-0.127px;transform:scaleY(1.08);transform-origin:0 11.00px;">2400.0</div>
<div class="t" style="left:136px;top:400.00px;font-size:13px;line-height:13px;color:#000;font-weight:normal;letter-spacing:-0.106px;transform:scaleY(1.08);transform-origin:0 11.00px;">24.32</div>
<div class="t" style="left:207px;top:400.00px;font-size:13px;line-height:13px;color:#000;font-weight:normal;letter-spacing:-0.143px;transform:scaleY(1.08);transform-origin:0 11.00px;">-13.25</div>
<div class="t" style="left:280px;top:400.00px;font-size:13px;line-height:13px;color:#000;font-weight:normal;letter-spacing:-0.075px;transform:scaleY(1.08);transform-origin:0 11.00px;">2.24</div>
<div class="t" style="left:351px;top:400.00px;font-size:13px;line-height:13px;color:#000;font-weight:normal;letter-spacing:-0.075px;transform:scaleY(1.08);transform-origin:0 11.00px;">6.68</div>
<div class="t" style="left:415px;top:400.00px;font-size:13px;line-height:13px;color:#000;font-weight:normal;letter-spacing:-0.075px;transform:scaleY(1.08);transform-origin:0 11.00px;">8.83</div>
<div class="t" style="left:477px;top:400.00px;font-size:13px;line-height:13px;color:#000;font-weight:normal;letter-spacing:-0.106px;transform:scaleY(1.08);transform-origin:0 11.00px;">15.32</div>
<div class="t" style="left:547px;top:400.00px;font-size:13px;line-height:13px;color:#000;font-weight:normal;letter-spacing:-0.329px;transform:scaleY(1.08);transform-origin:0 11.00px;">---</div>
<div class="t" style="left:600px;top:400.00px;font-size:13px;line-height:13px;color:#000;font-weight:normal;letter-spacing:-0.116px;transform:scaleY(1.08);transform-origin:0 11.00px;">Своб.</div>
<div class="t" style="left:661px;top:400.00px;font-size:13px;line-height:13px;color:#000;font-weight:normal;letter-spacing:-0.329px;transform:scaleY(1.08);transform-origin:0 11.00px;">---</div>
<div class="t" style="left:715px;top:400.00px;font-size:13px;line-height:13px;color:#000;font-weight:normal;letter-spacing:-0.006px;transform:scaleY(1.08);transform-origin:0 11.00px;">гориз.</div>
<div class="t" style="left:15px;top:426.00px;font-size:13px;line-height:13px;color:#000;font-weight:normal;letter-spacing:-0.230px;transform:scaleY(1.08);transform-origin:0 11.00px;">1</div>
<div class="t" style="left:66px;top:426.00px;font-size:13px;line-height:13px;color:#000;font-weight:normal;letter-spacing:-0.127px;transform:scaleY(1.08);transform-origin:0 11.00px;">2450.0</div>
<div class="t" style="left:136px;top:426.00px;font-size:13px;line-height:13px;color:#000;font-weight:normal;letter-spacing:-0.075px;transform:scaleY(1.08);transform-origin:0 11.00px;">24.3</div>
<div class="t" style="left:207px;top:426.00px;font-size:13px;line-height:13px;color:#000;font-weight:normal;letter-spacing:-0.143px;transform:scaleY(1.08);transform-origin:0 11.00px;">-5.131</div>
<div class="t" style="left:280px;top:426.00px;font-size:13px;line-height:13px;color:#000;font-weight:normal;letter-spacing:-0.075px;transform:scaleY(1.08);transform-origin:0 11.00px;">2.09</div>
<div class="t" style="left:351px;top:426.00px;font-size:13px;line-height:13px;color:#000;font-weight:normal;letter-spacing:-0.075px;transform:scaleY(1.08);transform-origin:0 11.00px;">6.37</div>
<div class="t" style="left:415px;top:426.00px;font-size:13px;line-height:13px;color:#000;font-weight:normal;letter-spacing:-0.075px;transform:scaleY(1.08);transform-origin:0 11.00px;">8.52</div>
<div class="t" style="left:477px;top:426.00px;font-size:13px;line-height:13px;color:#000;font-weight:normal;letter-spacing:-0.106px;transform:scaleY(1.08);transform-origin:0 11.00px;">14.89</div>
<div class="t" style="left:547px;top:426.00px;font-size:13px;line-height:13px;color:#000;font-weight:normal;letter-spacing:-0.329px;transform:scaleY(1.08);transform-origin:0 11.00px;">---</div>
<div class="t" style="left:600px;top:426.00px;font-size:13px;line-height:13px;color:#000;font-weight:normal;letter-spacing:-0.116px;transform:scaleY(1.08);transform-origin:0 11.00px;">Своб.</div>
<div class="t" style="left:661px;top:426.00px;font-size:13px;line-height:13px;color:#000;font-weight:normal;letter-spacing:-0.329px;transform:scaleY(1.08);transform-origin:0 11.00px;">---</div>
<div class="t" style="left:715px;top:426.00px;font-size:13px;line-height:13px;color:#000;font-weight:normal;letter-spacing:-0.006px;transform:scaleY(1.08);transform-origin:0 11.00px;">гориз.</div>
<div class="t" style="left:19px;top:539.00px;font-size:13px;line-height:13px;color:#000;font-weight:normal;letter-spacing:-0.258px;width:65px;text-align:center;transform:scaleY(1.08);transform-origin:0 11.00px;">Пуск</div>
<div class="t" style="left:90px;top:539.00px;font-size:13px;line-height:13px;color:#000;font-weight:normal;letter-spacing:-0.137px;width:122px;text-align:center;transform:scaleY(1.08);transform-origin:0 11.00px;">Оптимизация</div>
<div class="t" style="left:398px;top:539.00px;font-size:13px;line-height:13px;color:#000;font-weight:normal;letter-spacing:-0.058px;width:90px;text-align:center;transform:scaleY(1.08);transform-origin:0 11.00px;">Графики</div>
<div class="t" style="left:493px;top:539.00px;font-size:13px;line-height:13px;color:#000;font-weight:normal;letter-spacing:-0.049px;width:130px;text-align:center;transform:scaleY(1.08);transform-origin:0 11.00px;">Правка провода</div>
<div class="t" style="left:628px;top:539.00px;font-size:13px;line-height:13px;color:#000;font-weight:normal;letter-spacing:-0.015px;width:146px;text-align:center;transform:scaleY(1.08);transform-origin:0 11.00px;">Правка элемента</div>
</div>
</body></html>
